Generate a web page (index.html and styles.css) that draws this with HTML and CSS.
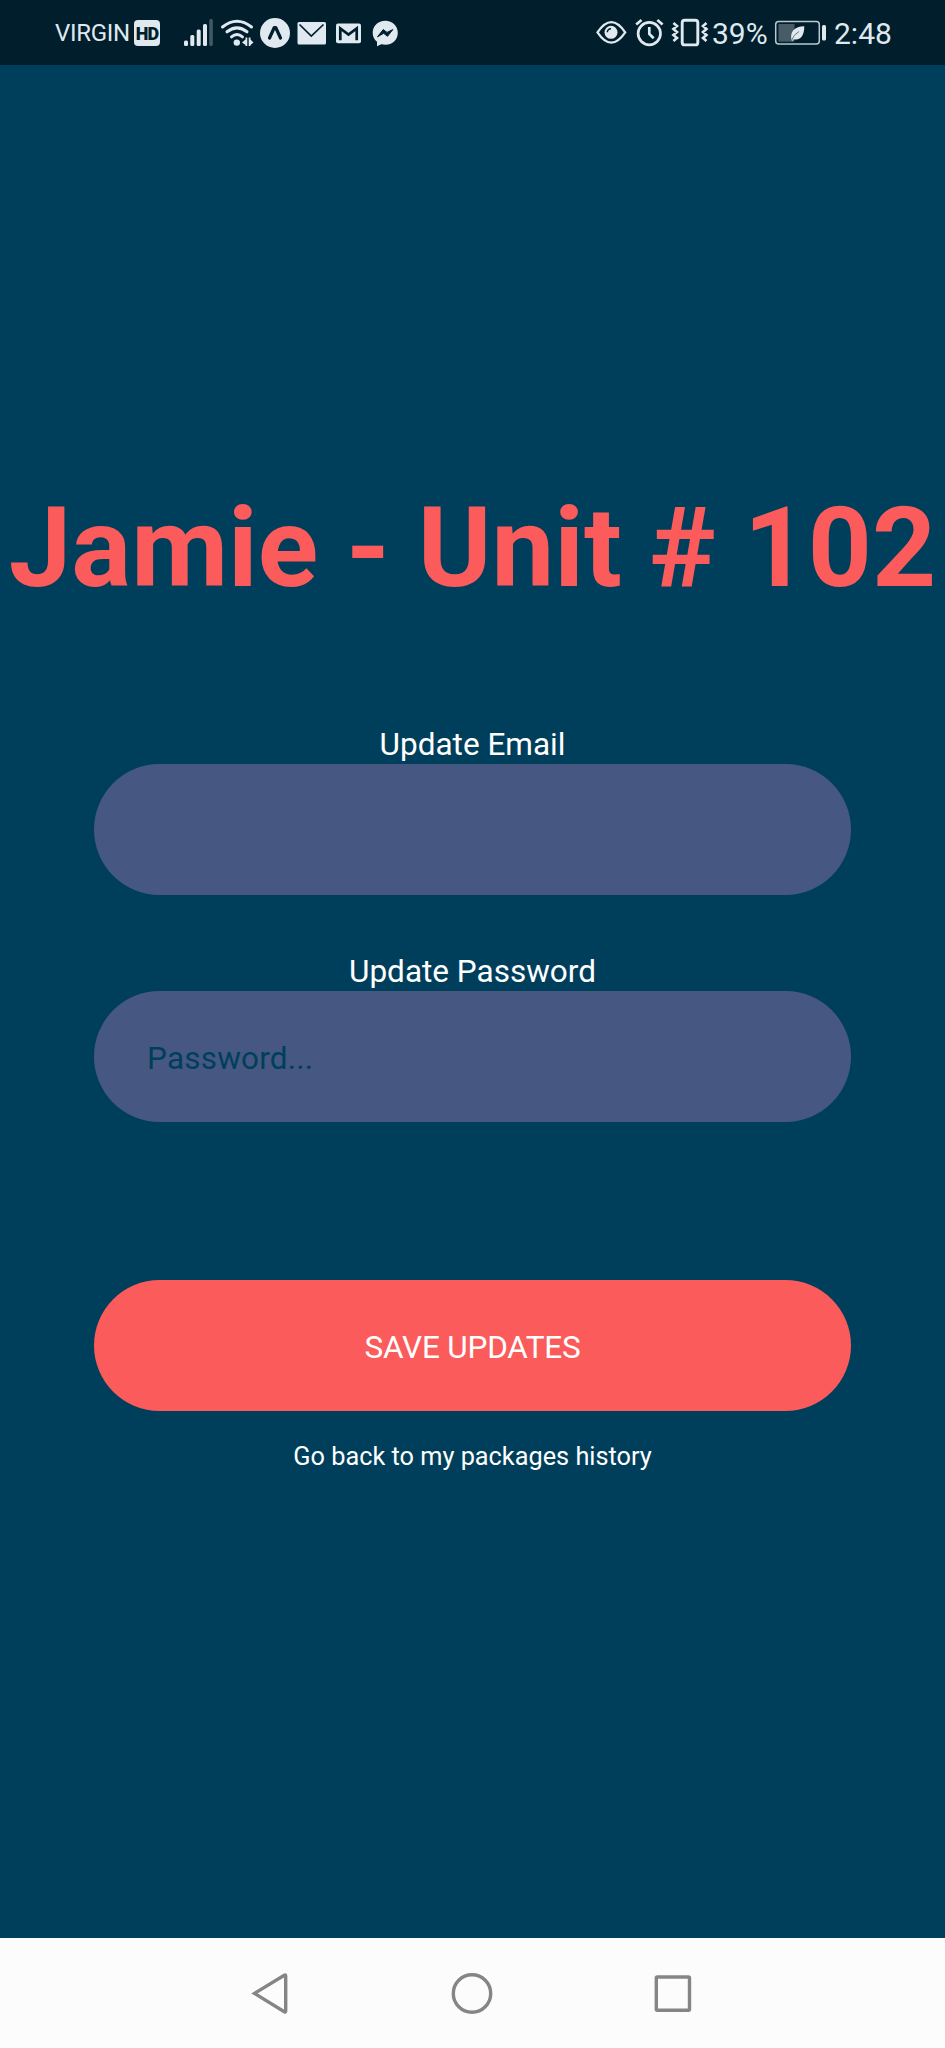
FILE: index.html
```html
<!DOCTYPE html>
<html lang="en">
<head>
<meta charset="utf-8">
<title>Update account</title>
<link rel="stylesheet" href="styles.css">
</head>
<body>
<div class="screen">
  <header class="status">
    <div class="status-group">
      <span class="carrier">VIRGIN</span>
      <span class="hd">HD</span>
      <svg class="icon" width="32" height="65" viewBox="182 0 32 65"><g fill="#dfe9ef"><rect x="184" y="40.500" width="4" height="5.500" rx="1.500"/><rect x="190.300" y="35" width="4" height="11" rx="1.500"/><rect x="196.700" y="29.500" width="4" height="16.500" rx="1.500"/><rect x="203" y="24" width="4" height="22" rx="1.500"/><rect x="209.300" y="19" width="3.500" height="27" rx="1.500" opacity=".3"/></g></svg>
      <svg class="icon" width="40" height="65" viewBox="217 0 40 65"><g fill="none" stroke="#dfe9ef" stroke-width="3" stroke-linecap="round"><path d="M222.500 27Q237 15.500 251.500 27M227 31.800Q237 24 247 31.800M231.500 36.800Q237 32.300 242.500 36.800"/></g><g fill="#dfe9ef"><circle cx="236.800" cy="42.600" r="3.200"/><path d="M242 42.500L245.500 39.500V37.500H247.300V46H245.500V45ZM248.700 37.500H250.500V39.500L253.500 42.500L250.500 45V46H248.700Z"/></g></svg>
      <svg class="icon" width="34" height="65" viewBox="258 0 34 65"><circle cx="275" cy="33" r="15" fill="#dfe9ef"/><path d="M269.500 38L274.300 27.500H275.700L280.500 38" fill="none" stroke="#001e2c" stroke-width="3.200" stroke-linecap="round" stroke-linejoin="round"/></svg>
      <svg class="icon" width="37" height="65" viewBox="293 0 37 65"><rect x="297.500" y="22" width="28.500" height="22.500" rx="1.500" fill="#dfe9ef"/><path d="M299.500 24.500L311.300 36L323.500 24.500" fill="none" stroke="#001e2c" stroke-width="1.700"/></svg>
      <svg class="icon" width="33" height="65" viewBox="332 0 33 65"><rect x="336" y="23.500" width="25" height="19.700" rx="2" fill="#dfe9ef"/><path d="M340.300 40.300V28.500L348.500 34.500L356.700 28.500V40.300" fill="none" stroke="#001e2c" stroke-width="2.700"/></svg>
      <svg class="icon" width="34" height="65" viewBox="368 0 34 65"><path d="M385.300 20.700C378 20.700 372.700 26 372.700 32.700C372.700 36.500 374.200 39.400 377 41.700V46.200L381.300 44.200C392 46.500 397.800 40 397.800 32.700C397.800 26 392.500 20.700 385.300 20.700Z" fill="#dfe9ef"/><path d="M377.500 36.800L383.200 29.600L387 32.400L392.800 29.600L387.500 36.300L383.700 33.300Z" fill="#001e2c" stroke="#001e2c"/></svg>
    </div>
    <div class="status-group">
      <svg class="icon" width="36" height="65" viewBox="593 0 36 65"><path d="M597.500 32.300Q611.300 11.800 625.200 32.300Q611.300 52.800 597.500 32.300Z" fill="none" stroke="#dfe9ef" stroke-width="2.300"/><circle cx="611" cy="32.300" r="6.500" fill="#dfe9ef"/><path d="M607.300 32.300A3.500 3.500 0 0 1 611 28.700" fill="none" stroke="#001e2c" stroke-width="1.500"/></svg>
      <svg class="icon" width="40" height="65" viewBox="629 0 40 65"><g fill="none" stroke="#dfe9ef" stroke-width="2.700"><circle cx="649.300" cy="33.600" r="11.200"/><path d="M649.300 27V34L653.700 38.300M636.200 24.500L641.500 20M657.300 20L662.600 24.500"/></g></svg>
      <svg class="icon" width="42" height="65" viewBox="669 0 42 65"><g fill="none" stroke="#dfe9ef"><rect x="682.200" y="20.200" width="15.600" height="24.700" rx="2.500" stroke-width="2.900"/><path d="M673.400 23L677 26L673.400 29L677 32L673.400 35L677 38L673.400 41M706.500 23L703 26L706.500 29L703 32L706.500 35L703 38L706.500 41" stroke-width="2.600"/></g></svg>
      <span class="percent">39%</span>
      <svg class="icon" width="62" height="65" viewBox="771 0 62 65"><rect x="775.700" y="21.600" width="43.600" height="22.500" rx="3" fill="none" stroke="#b9c8d0" stroke-width="1.500"/><rect x="778.500" y="24" width="16" height="17.700" fill="#475c67"/><path d="M791.500 40.200C789.800 31 794.500 26.700 804.300 26.200C804.300 35.500 800.500 40.600 794 39.200L792.300 41Z" fill="#dfe9ef"/><path d="M791.500 40.500Q793.500 34.500 799 31.500" stroke="#657983" stroke-width="1" fill="none"/><rect x="822" y="25" width="4" height="15.500" rx="1.500" fill="#dfe9ef"/></svg>
      <span class="clock">2:48</span>
    </div>
  </header>

  <main class="content">
    <h1 class="title">Jamie - Unit # 102</h1>
    <form class="form">
      <label class="label" for="email">Update Email</label>
      <input class="field" id="email" type="email">
      <label class="label" for="password">Update Password</label>
      <input class="field" id="password" type="password" placeholder="Password...">
      <button class="save" type="button">SAVE UPDATES</button>
    </form>
    <a class="back">Go back to my packages history</a>
  </main>

  <nav class="navbar">
    <svg width="42" height="48" viewBox="249 1968 42 48"><path d="M254.500 1992.400L284.300 1974.200Q285.700 1973.500 285.700 1975V2010Q285.700 2011.500 284.300 2010.700Z"/></svg>
    <svg width="48" height="48" viewBox="448.500 1968 48 48"><circle cx="472.500" cy="1992.500" r="18.700"/></svg>
    <svg width="42" height="48" viewBox="652 1968 42 48"><rect x="656.300" y="1976" width="33.200" height="33.200" rx="1"/></svg>
  </nav>
</div>
</body>
</html>
```

FILE: styles.css
```css
* {
  box-sizing: border-box;
}

body {
  margin: 0;
  background: #003f5c;
  font-family: Roboto, "Liberation Sans", sans-serif;
}

.screen {
  display: flex;
  flex-direction: column;
  width: 945px;
  height: 2048px;
  color: #fff;
}

.status {
  display: flex;
  justify-content: space-between;
  height: 65px;
  padding: 0 52px 0 55px;
  background: #001e2c;
  color: #dfe9ef;
}

.status-group {
  display: flex;
  align-items: center;
}

.status-group .icon {
  flex: none;
  margin-right: 3px;
}

.status-group .icon:nth-of-type(2) { margin-right: 1px; }
.status-group .icon:nth-of-type(3) { margin-right: 1px; }
.status-group .icon:nth-of-type(4) { margin-right: 2px; }

.status-group:last-child .icon { margin-right: 0; }
.status-group:last-child .icon:last-of-type { margin-right: 1px; }

.carrier {
  width: 79px;
  font-size: 24px;
  letter-spacing: -0.3px;
  line-height: 65px;
  padding-top: 2px;
}

.hd {
  width: 26px;
  height: 26px;
  margin-right: 22px;
  border-radius: 4px;
  background: #dfe9ef;
  color: #001e2c;
  font-size: 18px;
  font-weight: 900;
  letter-spacing: -0.8px;
  line-height: 27px;
  text-align: center;
}

.percent {
  width: 60px;
  padding-left: 1px;
  font-size: 30px;
  line-height: 67px;
  padding-top: 1px;
}

.clock {
  width: 59px;
  font-size: 30px;
  line-height: 67px;
  padding-top: 1px;
}

.content {
  flex: 1;
  display: flex;
  flex-direction: column;
  align-items: center;
  padding-top: 417px;
}

.title {
  margin: 0 0 110px;
  color: #fb5b5a;
  font-size: 111.9px;
  font-weight: 700;
  line-height: 132px;
  white-space: nowrap;
}

.form {
  display: flex;
  flex-direction: column;
  align-items: center;
  width: 757px;
}

.label {
  height: 40px;
  font-size: 31.5px;
  line-height: 41px;
}

.field {
  width: 100%;
  height: 131px;
  margin: 0 0 56px;
  padding: 3px 52px 0 53px;
  border: 0;
  border-radius: 66px;
  background: #465881;
  color: #fff;
  font: inherit;
  font-size: 31.5px;
  letter-spacing: 0.2px;
}

.field::placeholder {
  color: #003f5c;
  opacity: 1;
}

.save {
  width: 100%;
  height: 131px;
  margin-top: 101.500px;
  padding: 5px 0 0;
  border: 0;
  border-radius: 66px;
  background: #fb5b5a;
  color: #fff;
  font: inherit;
  font-size: 31.5px;
  letter-spacing: -0.2px;
}

.back {
  margin-top: 30px;
  font-size: 25.3px;
  line-height: 31px;
}

.navbar {
  display: flex;
  align-items: center;
  justify-content: space-between;
  height: 110px;
  padding: 0 251px 0 249px;
  background: #fcfcfc;
}

.navbar svg {
  fill: none;
  stroke: #858585;
  stroke-width: 3.4;
}
```
